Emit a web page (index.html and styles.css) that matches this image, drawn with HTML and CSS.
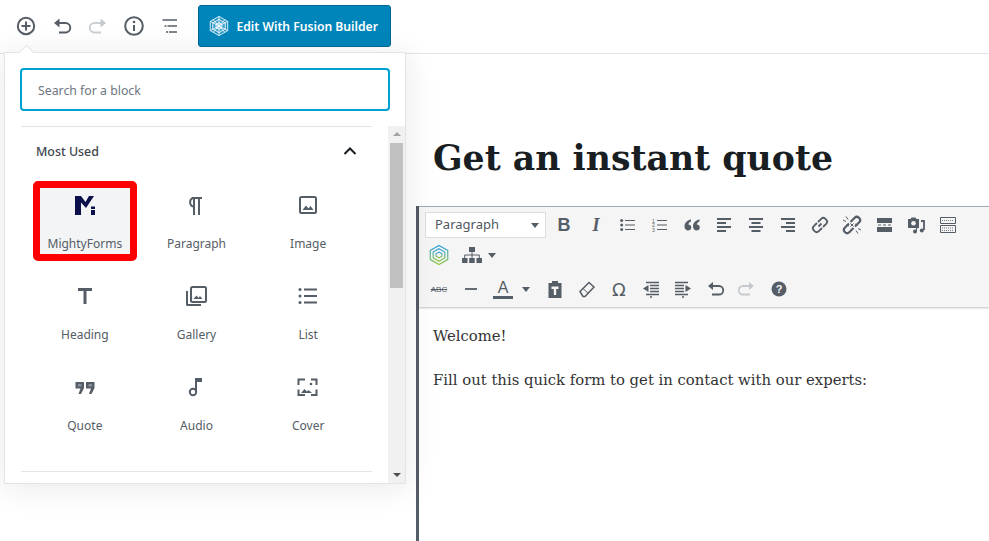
FILE: index.html
```html
<!DOCTYPE html>
<html lang="en">
<head>
    <meta charset="UTF-8">
    <title>Get an instant quote</title>
    <link rel="stylesheet" href="styles.css">
</head>
<body>
    <header class="topbar">
        <button class="tool"><svg viewBox="0 0 24 24" width="24" height="24"><circle cx="12" cy="12" r="8.2" class="ln"/><path d="M12 7.5v9M7.5 12h9" class="ln"/></svg></button>
        <button class="tool"><svg viewBox="0 0 24 24" width="24" height="24"><path d="M8 9h7.5a4.5 4.5 0 0 1 0 9.5H9" class="ln"/><path d="M9.5 4.5v9L4 9z" class="fl"/></svg></button>
        <button class="tool off"><svg viewBox="0 0 24 24" width="24" height="24"><path d="M16 9H8.500a4.500 4.500 0 0 0 0 9.500H15" class="ln"/><path d="M14.500 4.500v9L20 9z" class="fl"/></svg></button>
        <button class="tool"><svg viewBox="0 0 24 24" width="24" height="24"><circle cx="12" cy="12" r="8.800" class="ln"/><path d="M12 11v6" class="ln"/><circle cx="12" cy="8" r="1.300" class="fl"/></svg></button>
        <button class="tool"><svg viewBox="0 0 24 24" width="24" height="24"><path d="M4.500 6h3M7 6h12M6.500 12h2M9.500 12h9.500M8 18h2M11 18h8" class="ln thin"/></svg></button>
        <a class="fusion-btn" href="#">
            <svg viewBox="0 0 24 24" width="20" height="20" class="hex-white"><path d="M12 .5l10.500 6v11L12 23.500 1.500 17.500v-11z"/><path d="M12 4l7.500 4.300v7.400L12 20l-7.500-4.300V8.300z"/><path d="M12 8l3.500 2v4L12 16l-3.500-2v-4z"/><path d="M1.500 6.500l21 11M22.500 6.500l-21 11M12 .5v23M5 4.500l14 15M19 4.500L5 19.500"/></svg>
            Edit With Fusion Builder
        </a>
    </header>

    <main class="editor">
        <h1 class="post-title">Get an instant quote</h1>
        <div class="classic">
            <div class="mce-toolbar">
                <div class="mce-row">
                    <div class="mce-select">Paragraph<i class="caret"></i></div>
                    <span class="mce-btn txt-b">B</span>
                    <span class="mce-btn txt-i">I</span>
                    <span class="mce-btn"><svg viewBox="0 0 20 20" width="20" height="20"><path d="M7 5.500h10M7 10h10M7 14.500h10" class="ln one"/><circle cx="3.700" cy="5.500" r="1.500" class="fl"/><circle cx="3.700" cy="10" r="1.500" class="fl"/><circle cx="3.700" cy="14.500" r="1.500" class="fl"/></svg></span>
                    <span class="mce-btn"><svg viewBox="0 0 20 20" width="20" height="20"><path d="M7 5.500h10M7 10h10M7 14.500h10" class="ln one"/><text x="2" y="7.500" class="tiny">1</text><text x="2" y="12" class="tiny">2</text><text x="2" y="16.500" class="tiny">3</text></svg></span>
                    <span class="mce-btn"><svg viewBox="0 0 20 20" width="20" height="20"><path d="M9 4.500C5.500 5 2.500 7.500 2.500 11.500 2.500 13.800 4 15.500 6 15.500c1.900 0 3.300-1.300 3.300-3 0-1.700-1.300-3-3-3C6.600 8 7.500 7 9 6.500zM17.500 4.500c-3.500.5-6.500 3-6.500 7 0 2.300 1.500 4 3.500 4 1.900 0 3.300-1.300 3.300-3 0-1.700-1.300-3-3-3 .3-1.500 1.200-2.500 2.700-3z" class="fl"/></svg></span>
                    <span class="mce-btn"><svg viewBox="0 0 20 20" width="20" height="20"><path d="M3 4h14M3 8h9M3 12h14M3 16h9" class="ln two"/></svg></span>
                    <span class="mce-btn"><svg viewBox="0 0 20 20" width="20" height="20"><path d="M3 4h14M5.500 8h9M3 12h14M5.500 16h9" class="ln two"/></svg></span>
                    <span class="mce-btn"><svg viewBox="0 0 20 20" width="20" height="20"><path d="M3 4h14M8 8h9M3 12h14M8 16h9" class="ln two"/></svg></span>
                    <span class="mce-btn"><svg viewBox="0 0 20 20" width="20" height="20"><path d="M8.500 11.500l3-3M7 8l-3.200 3.200a3 3 0 0 0 0 4.200l.8.800a3 3 0 0 0 4.200 0L12 13M8 7l3.200-3.200a3 3 0 0 1 4.200 0l.8.800a3 3 0 0 1 0 4.200L13 12" class="ln two"/></svg></span>
                    <span class="mce-btn"><svg viewBox="0 0 20 20" width="20" height="20"><path d="M7 8.500L2.800 12.700a3 3 0 0 0 0 4.200l.3.300a3 3 0 0 0 4.200 0l4.200-4.200M13 11.500l4.200-4.200a3 3 0 0 0 0-4.200l-.3-.3a3 3 0 0 0-4.200 0L8.500 7" class="ln heavy"/><path d="M4 1.500l2 3M1 5l3 1.500M16 18.500l-2-3M19 15l-3-1.500M8.500 8.500l3 3M11.500 8.500l-3 3M13 9l3 1M7 11l-3-1" class="ln one"/></svg></span>
                    <span class="mce-btn"><svg viewBox="0 0 20 20" width="20" height="20"><path d="M3 3h15v5H3zM3 12h15v5H3z" class="fl"/><path d="M4 10h3M9 10h3M14 10h3" class="ln one"/></svg></span>
                    <span class="mce-btn"><svg viewBox="0 0 20 20" width="20" height="20"><path d="M2 4h2.500l1-1.500h4L10.500 4H13v9H2z" class="fl"/><circle cx="7.500" cy="8.300" r="2.300" fill="#f5f5f5"/><path d="M15 6h3v9" class="ln two"/><circle cx="15.800" cy="15.500" r="2" class="fl"/><circle cx="9" cy="16.500" r="2" class="fl"/><path d="M10.500 16.500V13h1" class="ln one"/></svg></span>
                    <span class="mce-btn"><svg viewBox="0 0 20 20" width="20" height="20"><path d="M2.500 2.500h15v6h-15zM2.500 10.500h15v7h-15z" class="ln one"/><path d="M4 5.500h12M4 13h12M4 15.500h12" class="ln one dots"/></svg></span>
                </div>
                <div class="mce-row second">
                    <span class="mce-btn"><svg viewBox="0 0 24 24" width="20" height="20" class="hex-color"><defs><linearGradient id="hexgrad" x1="0" y1="0" x2="0" y2="1"><stop offset="0" stop-color="#2f9fe0"/><stop offset="1" stop-color="#8ec63f"/></linearGradient></defs><path d="M12 .5l10.500 6v11L12 23.500 1.500 17.500v-11z"/><path d="M12 4.500l7 4v7l-7 4-7-4v-7z"/><path d="M12 8.500l3.500 2v3L12 15.500l-3.500-2v-3z"/></svg></span>
                    <span class="mce-btn wide"><svg viewBox="0 0 22 20" width="22" height="20"><path d="M8 2h6v5H8zM1 13h5.500v5H1zM8.200 13h5.500v5H8.200zM15.500 13H21v5h-5.500z" class="fl"/><path d="M11 7v6M3.700 13v-3h14.600v3" class="ln one"/></svg><i class="caret"></i></span>
                </div>
                <div class="mce-row third">
                    <span class="mce-btn txt-abc">ABC</span>
                    <span class="mce-btn"><svg viewBox="0 0 20 20" width="20" height="20"><path d="M4 10h12" class="ln two"/></svg></span>
                    <span class="mce-btn wide color"><span class="txt-a">A</span><i class="caret"></i></span>
                    <span class="mce-btn"><svg viewBox="0 0 20 20" width="20" height="20"><path d="M7 2h6v2h3.500v15h-13V4H7z" class="fl"/><path d="M6.500 7.500h7v2.500h-2.300v6H8.800v-6H6.500z" fill="#f5f5f5"/></svg></span>
                    <span class="mce-btn"><svg viewBox="0 0 20 20" width="20" height="20"><path d="M3 12.500L12 3.500l5 4.500-9 9.500H6z" class="ln one5"/><path d="M6 9.500l5 4.700" class="ln one"/></svg></span>
                    <span class="mce-btn txt-omega">Ω</span>
                    <span class="mce-btn"><svg viewBox="0 0 20 20" width="20" height="20"><path d="M5 3.500h13M9 6.500h9M9 9.500h9M9 12.500h9M5 15.500h13M9 18h2" class="ln one5"/><path d="M7.500 6v7L2 9.500z" class="fl"/></svg></span>
                    <span class="mce-btn"><svg viewBox="0 0 20 20" width="20" height="20"><path d="M2 3.500h13M2 6.500h9M2 9.500h9M2 12.500h9M2 15.500h13M9 18h2" class="ln one5"/><path d="M12.500 6v7l5.500-3.500z" class="fl"/></svg></span>
                    <span class="mce-btn"><svg viewBox="0 0 20 20" width="20" height="20"><path d="M7 7h7a4 4 0 0 1 0 8.500H7" class="ln two"/><path d="M8 3v8L3 7z" class="fl"/></svg></span>
                    <span class="mce-btn off"><svg viewBox="0 0 20 20" width="20" height="20"><path d="M13 7H6a4 4 0 0 0 0 8.500h7" class="ln two"/><path d="M12 3v8l5-4z" class="fl"/></svg></span>
                    <span class="mce-btn"><svg viewBox="0 0 20 20" width="20" height="20"><circle cx="10" cy="10" r="7.500" class="fl"/><text x="10" y="14" class="qmark">?</text></svg></span>
                </div>
            </div>
            <div class="mce-body">
                <p>Welcome!</p>
                <p>Fill out this quick form to get in contact with our experts:</p>
            </div>
        </div>
    </main>

    <div class="inserter">
        <div class="inserter-arrow"></div>
        <div class="inserter-search">
            <input type="text" placeholder="Search for a block">
        </div>
        <div class="inserter-panel">
            <div class="block-list">
                <div class="block-section">
                    <div class="section-head">
                        <span>Most Used</span>
                        <svg viewBox="0 0 24 24" width="24" height="24"><path d="M6.500 15l5.500-5.500 5.500 5.500" class="ln dark"/></svg>
                    </div>
                    <div class="block-grid">
                        <div class="block-item marked">
                            <svg viewBox="0 0 24 24" width="24" height="24"><path d="M2 3h6l4.500 6L16 3h5l-8 12-5-5.500V22H2zM18 17h4v5h-4zM18 13.500h4V16h-4z" fill="#0b0f4b"/></svg>
                            <span>MightyForms</span>
                        </div>
                        <div class="block-item">
                            <svg viewBox="0 0 24 24" width="24" height="24"><path d="M8 4h10v2h-2v16h-2V6h-3v16H9V6H8z" class="fl"/><path d="M9.500 5a4 4.300 0 0 0 0 8.500" class="ln"/></svg>
                            <span>Paragraph</span>
                        </div>
                        <div class="block-item">
                            <svg viewBox="0 0 24 24" width="24" height="24"><rect x="4" y="4" width="16" height="16" rx="1.500" class="ln"/><path d="M6.500 17l3.500-4.500 2.500 3 2-2.500 3 4z" class="fl"/></svg>
                            <span>Image</span>
                        </div>
                        <div class="block-item">
                            <svg viewBox="0 0 24 24" width="24" height="24"><path d="M5 4v3h5.500v13h3V7H19V4z" class="fl"/></svg>
                            <span>Heading</span>
                        </div>
                        <div class="block-item">
                            <svg viewBox="0 0 24 24" width="24" height="24"><rect x="7" y="3" width="15" height="15" rx="1.500" class="ln"/><path d="M3 7v13.500a.5.5 0 0 0 .5.500H17" class="ln"/><path d="M9.500 15l3-3.500 2 2.500 1.500-2 2.500 3z" class="fl"/></svg>
                            <span>Gallery</span>
                        </div>
                        <div class="block-item">
                            <svg viewBox="0 0 24 24" width="24" height="24"><path d="M8 5.500h13M8 12h13M8 18.500h13" class="ln"/><circle cx="4" cy="5.500" r="1.500" class="fl"/><circle cx="4" cy="12" r="1.500" class="fl"/><circle cx="4" cy="18.500" r="1.500" class="fl"/></svg>
                            <span>List</span>
                        </div>
                        <div class="block-item">
                            <svg viewBox="0 0 24 24" width="24" height="24"><path d="M2.500 7h8.500v6l-3 6H5.500l2-5.500h-5zM13 7h8.500v6l-3 6H16l2-5.500h-5z" class="fl"/><path d="M5 9h3.500v2.500H5zM15.500 9H19v2.500h-3.500z" fill="#8a9097"/></svg>
                            <span>Quote</span>
                        </div>
                        <div class="block-item">
                            <svg viewBox="0 0 24 24" width="24" height="24"><path d="M12 3v13.500" class="ln"/><path d="M12 3h6v4h-6z" class="fl"/><circle cx="9" cy="17" r="3.200" class="ln"/></svg>
                            <span>Audio</span>
                        </div>
                        <div class="block-item">
                            <svg viewBox="0 0 24 24" width="24" height="24"><path d="M2.500 10V4.500H9M15 4.500h5.500V10M20.500 14.500v5.500H15M9 20H2.500v-5.500" class="ln"/><circle cx="15" cy="9" r="1.300" class="fl"/><path d="M5 18l3.500-4 2.500 2.500 1.500-1.500 3.500 3z" class="fl"/></svg>
                            <span>Cover</span>
                        </div>
                    </div>
                </div>
                <div class="block-section"></div>
            </div>
            <div class="fake-scroll">
                <i class="arrow-up"></i>
                <div class="track"><div class="thumb"></div></div>
                <i class="arrow-down"></i>
            </div>
        </div>
    </div>
</body>
</html>
```

FILE: styles.css
```css
html, body {
    margin: 0;
    padding: 0;
    height: 541px;
    overflow: hidden;
    background-color: #fff;
}
body {
    font-family: "Noto Sans", Arial, sans-serif;
    color: #191e23;
    position: relative;
}
/* shared icon styles */
svg {
    display: block;
}
.ln {
    fill: none;
    stroke: #555d66;
    stroke-width: 2;
}
.ln.thin { stroke-width: 1.6; }
.ln.one { stroke-width: 1; }
.ln.one5 { stroke-width: 1.5; }
.ln.two { stroke-width: 1.8; }
.ln.heavy { stroke-width: 2.2; }
.ln.dark { stroke: #191e23; stroke-width: 2; }
.ln.dots { stroke-dasharray: 1 1; stroke-width: .8; }
.fl {
    fill: #555d66;
}
.off .ln { stroke: #c5c9cd; }
.off .fl { fill: #c5c9cd; }
.tool.off .ln { stroke: #ccd0d4; }

.topbar {
    height: 52px;
    padding-bottom: 1px;
    border-bottom: 1px solid #e2e4e7;
    display: flex;
    align-items: center;
    padding-left: 8px;
}
.tool {
    width: 36px;
    height: 36px;
    padding: 0;
    border: none;
    background: none;
    display: flex;
    align-items: center;
    justify-content: center;
}
.fusion-btn {
    margin-left: 10px;
    width: 193px;
    height: 42px;
    box-sizing: border-box;
    border: 1px solid #006799;
    border-radius: 3px;
    background-color: #0085ba;
    color: #fff;
    font-size: 12.150px;
    font-weight: 600;
    text-decoration: none;
    display: flex;
    align-items: center;
    gap: 7.500px;
    padding-left: 10px;
}
.hex-white path {
    fill: rgba(255, 255, 255, 0.12);
    stroke: #fff;
    stroke-width: 1;
}
.hex-color path {
    fill: none;
    stroke: url(#hexgrad);
    stroke-width: 1.400;
}

/* editor area */
.editor {
    padding-left: 416px;
}
.post-title {
    margin: 0;
    padding: 79px 0 23px 17px;
    height: 50px;
    line-height: 50px;
    font-family: "DejaVu Serif", Georgia, serif;
    font-size: 34.700px;
    font-weight: bold;
}
.classic {
    border-left: 3px solid #555d66;
    height: 335px;
}
.mce-toolbar {
    height: 101px;
    box-sizing: border-box;
    border-top: 1px solid #a2aab2;
    background-color: #f5f5f5;
    box-shadow: 0 1px 2px rgba(0, 0, 0, 0.25);
    padding: 5px 0 0 4px;
    position: relative;
}
.mce-row {
    display: flex;
    height: 26px;
    align-items: center;
}
.mce-row.second {
    height: 30px;
    margin-top: 2px;
}
.mce-row.third {
    height: 30px;
    margin-top: 4px;
}
.mce-select {
    margin: 0 2px;
    width: 121px;
    height: 26px;
    box-sizing: border-box;
    border: 1px solid #ddd;
    background-color: #fff;
    font-size: 13px;
    color: #50575e;
    line-height: 23px;
    padding-left: 9px;
    position: relative;
}
.mce-select .caret {
    position: absolute;
    right: 6px;
    top: 10px;
}
.caret {
    display: block;
    width: 0;
    height: 0;
    border-left: 4px solid transparent;
    border-right: 4px solid transparent;
    border-top: 5px solid #555d66;
}
.mce-btn {
    width: 32px;
    height: 26px;
    display: flex;
    align-items: center;
    justify-content: center;
    color: #555d66;
    flex: none;
}
.mce-btn.wide {
    width: 52px;
    justify-content: flex-start;
    padding-left: 6px;
    box-sizing: border-box;
    gap: 5px;
}
.mce-btn.color {
    padding-left: 6px;
    gap: 9px;
}
.txt-b {
    font: bold 18px "Liberation Sans", sans-serif;
}
.txt-i {
    font: italic bold 18px "Liberation Serif", serif;
}
.txt-abc {
    font: 8px "Liberation Sans", sans-serif;
    text-decoration: line-through;
}
.txt-a {
    font: 16px/17px "Liberation Sans", sans-serif;
    width: 20px;
    text-align: center;
    border-bottom: 3px solid #555d66;
}
.txt-omega {
    font: 18px "DejaVu Sans", sans-serif;
}
.tiny {
    font: 5px "Liberation Sans", sans-serif;
    fill: #555d66;
}
.qmark {
    font: bold 11px "Liberation Sans", sans-serif;
    fill: #f5f5f5;
    text-anchor: middle;
}
.mce-body {
    padding: 19px 0 0 14px;
    font-family: "DejaVu Serif", Georgia, serif;
    font-size: 14.840px;
    line-height: 20px;
    color: #333;
}
.mce-body p {
    margin: 0 0 24px;
}

/* block inserter popover */
.inserter {
    position: absolute;
    left: 4px;
    top: 52px;
    width: 402px;
    height: 432px;
    box-sizing: border-box;
    border: 1px solid #e2e4e7;
    background-color: #fff;
    box-shadow: 0 3px 30px rgba(25, 30, 35, 0.1);
}
.inserter-arrow {
    position: absolute;
    left: 16px;
    top: -6px;
    width: 10px;
    height: 10px;
    background-color: #fff;
    border-top: 1px solid #e2e4e7;
    border-left: 1px solid #e2e4e7;
    transform: rotate(45deg);
}
.inserter-search {
    height: 73px;
    box-sizing: border-box;
    padding: 15px 15px 0;
}
.inserter-search input {
    width: 370px;
    height: 43px;
    box-sizing: border-box;
    border: 2px solid #00a0d2;
    border-radius: 4px;
    padding: 2px 16px 0;
    font-family: inherit;
    font-size: 12.300px;
    outline: none;
}
.inserter-search input::placeholder {
    color: #6c7781;
    opacity: 1;
}
.inserter-panel {
    display: flex;
    height: 357px;
}
.block-list {
    width: 383px;
    overflow: hidden;
}
.block-section {
    margin: 0 16px;
    border-top: 1px solid #e2e4e7;
}
.block-section:first-child {
    padding-bottom: 28px;
}
.section-head {
    display: flex;
    justify-content: space-between;
    align-items: center;
    height: 54px;
    padding: 0 10px 6px 15px;
    box-sizing: border-box;
    font-size: 12.400px;
    font-weight: 500;
    color: #40464d;
}
.block-grid {
    display: grid;
    grid-template-columns: repeat(3, 1fr);
    row-gap: 11px;
    padding: 0 8px;
}
.block-item {
    height: 80px;
    margin: 0 4px;
    box-sizing: border-box;
    border: 7px solid transparent;
    border-radius: 5px;
    padding-top: 5px;
    display: flex;
    flex-direction: column;
    align-items: center;
    gap: 18px;
    font-size: 12px;
    line-height: 18px;
    color: #555d66;
}
.block-item.marked {
    border-color: #f00;
    background-color: #f3f4f5;
    background-clip: padding-box;
}
.fake-scroll {
    width: 17px;
    background-color: #f1f1f1;
    display: flex;
    flex-direction: column;
    align-items: center;
}
.fake-scroll .track {
    flex: 1;
    width: 100%;
}
.fake-scroll .thumb {
    width: 13px;
    margin: 5px auto 0;
    height: 145px;
    background-color: #c1c1c1;
}
.arrow-up, .arrow-down {
    display: block;
    width: 0;
    height: 0;
    border-left: 4px solid transparent;
    border-right: 4px solid transparent;
}
.arrow-up {
    margin-top: 6px;
    border-bottom: 4px solid #a3a3a3;
    margin-bottom: 2px;
}
.arrow-down {
    margin-bottom: 6px;
    border-top: 4px solid #505050;
}
```
